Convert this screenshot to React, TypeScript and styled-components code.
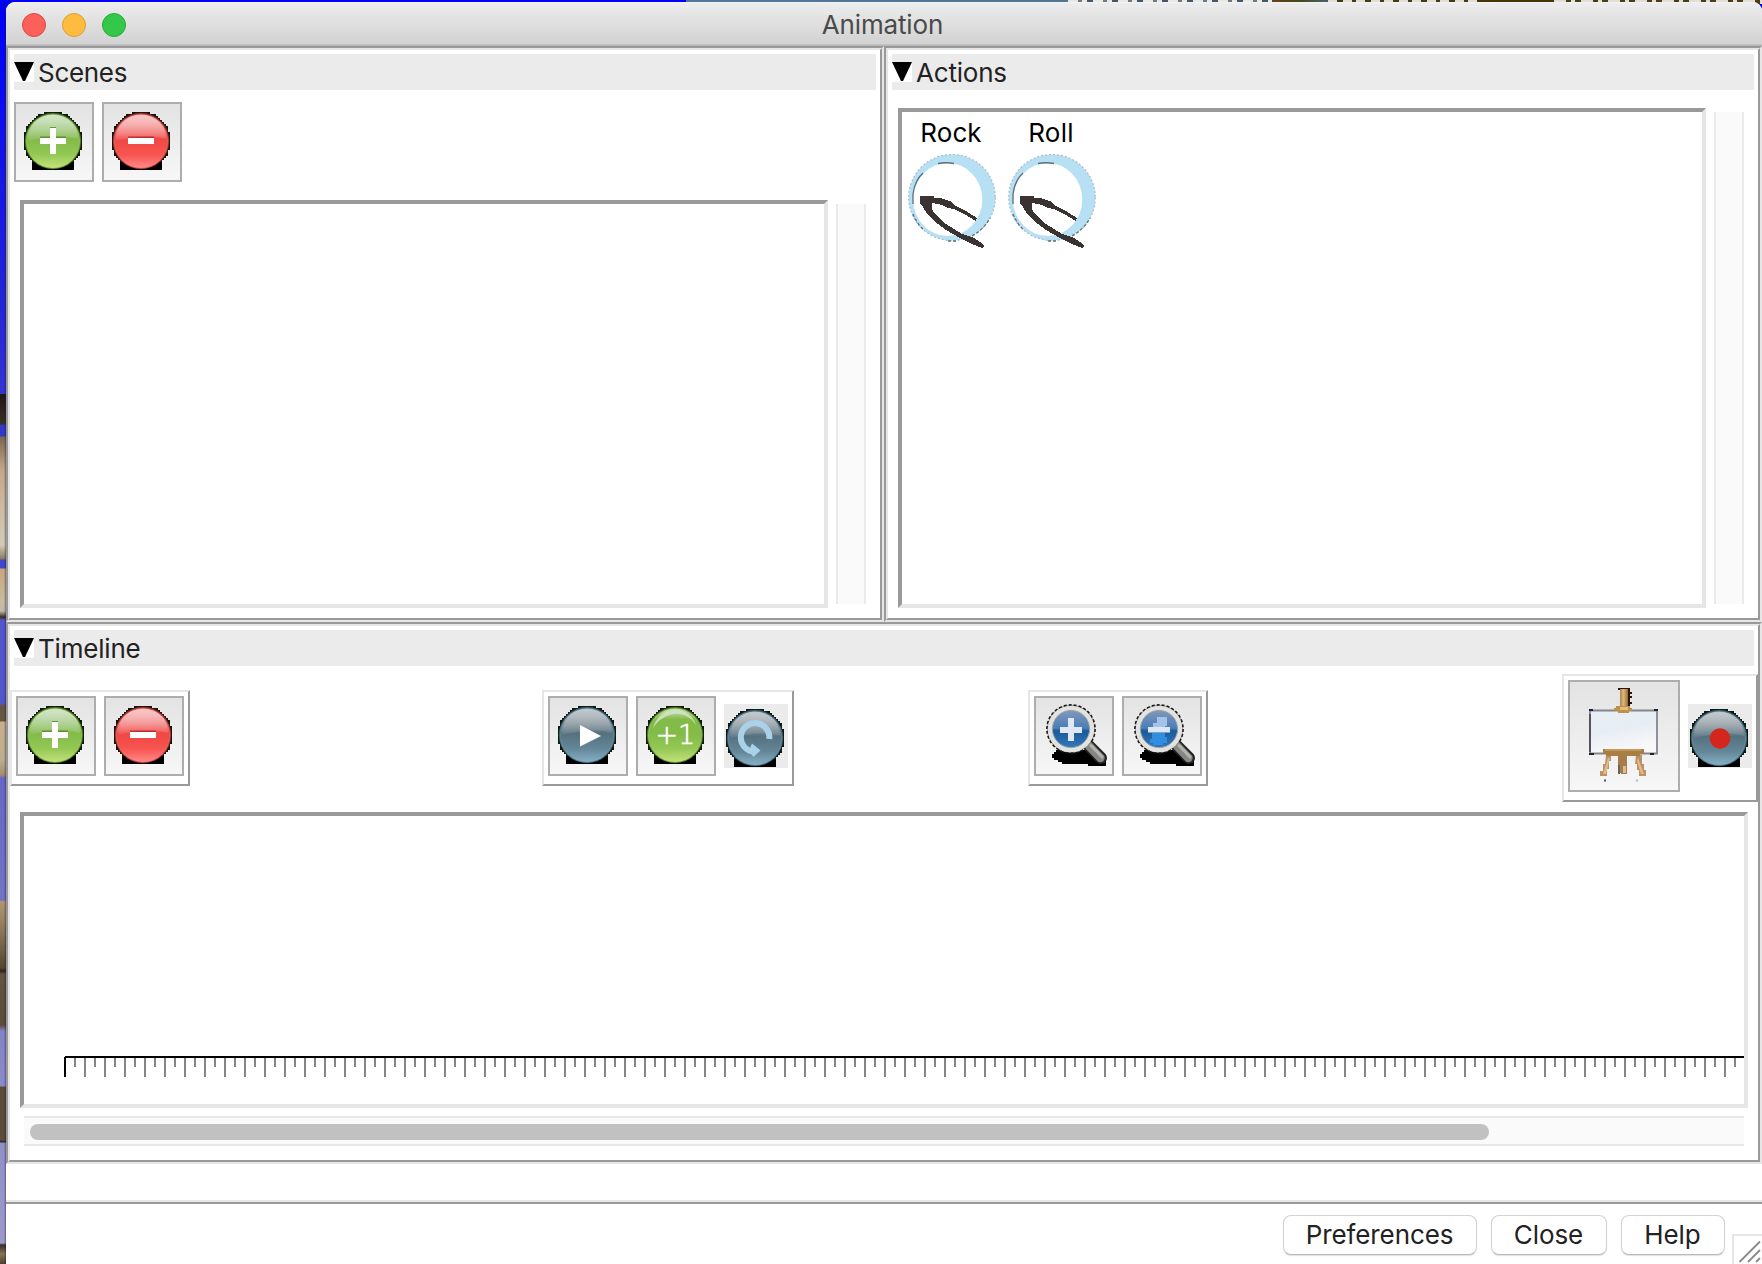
import React from "react";
import styled, { createGlobalStyle } from "styled-components";

const DARK = "#999999";
const LIGHT = "#e6e6e6";

const GlobalStyle = createGlobalStyle`
  * { box-sizing: border-box; }
  body { margin: 0; overflow: hidden; font-family: Inter, "Liberation Sans", sans-serif; font-size: 26px; color: #222; }
  svg { display: block; flex: none; }
`;

/* ---------- desktop and window ---------- */

const Desktop = styled.div`
  width: 1762px;
  height: 1264px;
  padding: 2px 0 0 6px;
  background:
    linear-gradient(90deg, transparent 4px, rgba(20, 20, 50, 0.45) 6px) 0 2px / 6px 100% no-repeat,
    linear-gradient(
      180deg,
      transparent 394px, #1d1913 394px, #3a3022 424px, #3338c8 425px, #3338c8 436px,
      #7b684f 437px, #c4a788 470px, #d0bba2 510px, #cfccb6 545px, #8a7a5c 559px,
      #4244cc 560px, #4244cc 568px, #c9a57c 569px, #c9bd9b 600px, #c0b9ae 611px,
      #3a3020 617px, #5255cc 620px, #5255cc 703px, #655643 706px, #655643 721px,
      #c9ae8a 722px, #bcae8e 760px, #a78b66 775px, #6467c8 778px, #7274c6 900px,
      #b09770 902px, #8f785a 930px, #54452f 968px, #2c241a 971px, #63533f 974px,
      #5a4b3a 1025px, #8283c6 1031px, #8c8bc8 1086px, #5c4c3c 1087px, #5c4c3c 1140px,
      #2b2318 1142px, #9090c8 1143px, #9c9aca 1243px, #3a2f24 1245px, #8b745a 1254px, #4f4030 1264px
    ) 0 0 / 6px 1264px no-repeat,
    repeating-linear-gradient(90deg, #e8e8e4 0 10px, #6d7a82 10px 14px, #e8e8e4 14px 19px, #46576a 19px 25px) 1068px 0 / 204px 2px no-repeat,
    repeating-linear-gradient(90deg, #e0ded6 0 9px, #473914 9px 15px, #e0ded6 15px 24px, #473914 24px 28px) 1328px 0 / 150px 2px no-repeat,
    repeating-linear-gradient(90deg, #e0ded6 0 12px, #4c3d15 12px 17px, #e0ded6 17px 21px, #4c3d15 21px 27px) 1554px 0 / 208px 4px no-repeat,
    linear-gradient(90deg, transparent 686px, #53779a 686px, #4f7795 1180px, #59402c 1210px, #6b401c 1270px, #454b1c 1300px, #4c5f68 1325px, #453709 1345px, #43340a 1762px) 0 0 / 1762px 4px no-repeat,
    linear-gradient(180deg, #0000fa 0, #0c0cf0 100px, #2424d8 300px, #3535d0 400px, #4a4acc 600px);
`;

const Window = styled.main`
  display: flex;
  flex-direction: column;
  width: 1756px;
  height: 1262px;
  background: #fff;
  border-radius: 9px 9px 0 0;
  overflow: hidden;
`;

const TitleBar = styled.header`
  display: grid;
  grid-template-columns: 200px 1fr 200px;
  align-items: center;
  height: 44px;
  flex: none;
  padding-left: 16px;
  background: linear-gradient(180deg, #f4f4f4 0, #ececec 2px, #d2d2d2 42px, #b4b4b4 43px, #b4b4b4 44px);
`;

const Lights = styled.div`
  display: flex;
  gap: 16px;
  margin-top: 1px;
`;

const Light = styled.span<{ $fill: string; $edge: string }>`
  width: 24px;
  height: 24px;
  border-radius: 50%;
  background: ${(p) => p.$fill};
  border: 1px solid ${(p) => p.$edge};
`;

const Title = styled.h1`
  margin: 2px 0 0;
  padding-right: 19px;
  text-align: center;
  font-size: 26px;
  font-weight: 400;
  line-height: 32px;
  letter-spacing: -0.15px;
  color: #4a4a4a;
`;

/* ---------- grooved panels ---------- */

const TopRow = styled.div`
  display: flex;
  height: 576px;
  flex: none;
`;

const Groove = styled.section<{ $w?: number; $h: number }>`
  width: ${(p) => (p.$w ? `${p.$w}px` : "100%")};
  height: ${(p) => p.$h}px;
  flex: none;
  border: 2px solid;
  border-color: ${DARK} ${LIGHT} ${LIGHT} ${DARK};
`;

const GrooveInner = styled.div`
  display: flex;
  flex-direction: column;
  height: 100%;
  border: 2px solid;
  border-color: ${LIGHT} ${DARK} ${DARK} ${LIGHT};
  padding-top: 4px;
`;

const Heading = styled.h2`
  display: flex;
  align-items: center;
  gap: 4px;
  height: 36px;
  flex: none;
  margin: 0 4px;
  background: #ebebeb;
  font-size: 26px;
  font-weight: 400;
  line-height: 36px;
`;

const Disclosure = styled.svg`
  background: #fff;
`;

const Label = styled.span<{ $track: number }>`
  letter-spacing: ${(p) => p.$track}px;
  padding-top: 1px;
`;

const Panel = ({ title, track = 0, w, h, children }: { title: string; track?: number; w?: number; h: number; children: React.ReactNode }) => (
  <Groove $w={w} $h={h}>
    <GrooveInner>
      <Heading>
        <Disclosure width="20" height="20" viewBox="0 0 20 20">
          <path d="M0 0H20L11 19H9Z" fill="#000" />
        </Disclosure>
        <Label $track={track}>{title}</Label>
      </Heading>
      {children}
    </GrooveInner>
  </Groove>
);

/* ---------- lists and scrollbars ---------- */

const ListRow = styled.div<{ $top: number }>`
  display: flex;
  gap: 8px;
  margin: ${(p) => p.$top}px 14px 10px 10px;
  flex: 1;
`;

const Sunken = styled.div`
  flex: 1;
  display: flex;
  border: 4px solid;
  border-color: ${DARK} ${LIGHT} ${LIGHT} ${DARK};
`;

const VScroll = styled.div`
  width: 30px;
  margin: 4px 0;
  border: solid #ebebeb;
  border-width: 0 2px;
  background: #fafafa;
`;

const HScroll = styled.div`
  height: 30px;
  flex: none;
  margin: 8px 14px 0;
  padding: 6px;
  border: solid #e8e8e8;
  border-width: 2px 0;
  background: #fafafa;
`;

const Thumb = styled.div`
  width: 1459px;
  height: 16px;
  border-radius: 8px;
  background: #c1c1c1;
`;

/* ---------- tool buttons ---------- */

const Tools = styled.div`
  display: flex;
  gap: 8px;
  margin: 12px 4px 0;
`;

const ToolButton = styled.button<{ $size?: number; $inset?: string }>`
  display: flex;
  align-items: center;
  justify-content: center;
  width: ${(p) => p.$size ?? 80}px;
  height: ${(p) => p.$size ?? 80}px;
  flex: none;
  padding: ${(p) => p.$inset ?? "0 2px 2px 0"};
  border: 2px solid #adadad;
  background: linear-gradient(180deg, #e3e3e3, #f7f7f7);
`;

const FlatButton = styled.button`
  width: 64px;
  height: 64px;
  flex: none;
  padding: 3px 0 0 2px;
  border: 0;
  background: #ebebeb;
`;

const ToolBar = styled.div`
  display: flex;
  align-items: center;
  height: 128px;
  margin-top: 8px;
  flex: none;
`;

const ToolGroup = styled.div<{ $before?: number; $tall?: boolean }>`
  display: flex;
  align-items: center;
  gap: 8px;
  height: ${(p) => (p.$tall ? 128 : 96)}px;
  margin-left: ${(p) => p.$before ?? 0}px;
  padding: 4px 4px 8px;
  border: 2px solid;
  border-color: ${LIGHT} ${DARK} ${DARK} ${LIGHT};
`;

/* ---------- icons ---------- */

const balls = {
  green: { edge: "#3b6a1b", top: "#a3cb88", mid: "#83bb48", low: "#94c855", glow: "#c4e27c", gloss: "#d2e4c6" },
  red: { edge: "#9c2828", top: "#f49090", mid: "#f04844", low: "#f85450", glow: "#ff8a88", gloss: "#f8c6c6" },
  slate: { edge: "#35566a", top: "#8f9aa2", mid: "#55717f", low: "#648798", glow: "#86b0c6", gloss: "#c2c8cc" },
};

const Ball = ({ tone, flat, id, children }: { tone: keyof typeof balls; flat?: boolean; id: string; children: React.ReactNode }) => {
  const c = balls[tone];
  return (
    <svg width="58" height="58" viewBox="0 0 58 58">
      <defs>
        <linearGradient id={`${id}l`} x1="0" y1="0" x2="0" y2="1">
          <stop offset="0" stopColor={c.gloss} />
          <stop offset="0.2" stopColor={flat ? c.mid : c.top} />
          <stop offset="0.47" stopColor={c.mid} />
          <stop offset="0.75" stopColor={c.low} />
          <stop offset="1" stopColor={c.glow} />
        </linearGradient>
        <linearGradient id={`${id}g`} x1="0" y1="0" x2="0" y2="1">
          <stop offset="0" stopColor={c.gloss} stopOpacity="0.8" />
          <stop offset="1" stopColor={c.gloss} stopOpacity="0.08" />
        </linearGradient>
      </defs>
      <path d="M8 48H50V58H8Z" fill="#000" />
      <path
        d="M20 0H38V2H44V4H46V6H48V8H50V10H52V12H54V14H56V20H58V38H56V44H54V46H52V48H50V50H8V48H6V46H4V44H2V38H0V20H2V14H4V12H6V10H8V8H10V6H12V4H14V2H20Z"
        fill="#10180c"
      />
      <circle cx="29" cy="29" r="28.2" fill={c.edge} />
      <circle cx="29" cy="29.3" r="26.8" fill={`url(#${id}l)`} stroke={c.glow} strokeOpacity="0.35" strokeWidth="1.4" />
      {!flat && <path d="M4 29C4 12 15 3 29 3S54 12 54 27C43 23 24 24 4 29Z" fill={`url(#${id}g)`} />}
      {flat && <path d="M7 22C10 11 19 4 29 4S47 10 50 19C44 10 36 7 28 8S12 14 7 22Z" fill={c.gloss} opacity="0.85" />}
      {children}
    </svg>
  );
};

const PlusIcon = ({ id }: { id: string }) => (
  <Ball tone="green" id={id}>
    <path d="M16 24.5H42V27H16ZM26 15H32V17H26Z" fill="#4c7d2a" opacity="0.75" />
    <path d="M26 16H32V26H42V32H32V42H26V32H16V26H26Z" fill="#fff" />
  </Ball>
);

const MinusIcon = ({ id }: { id: string }) => (
  <Ball tone="red" id={id}>
    <path d="M16 24.5H42V27H16Z" fill="#aa2222" opacity="0.75" />
    <path d="M16 26H42V32H16Z" fill="#fff" />
  </Ball>
);

const PlayIcon = () => (
  <Ball tone="slate" id="play">
    <path d="M22 19L43 30L22 40.5Z" fill="#fff" />
  </Ball>
);

const BallText = styled.text`
  font-family: "DejaVu Sans", sans-serif;
  font-weight: 200;
  font-size: 27px;
  fill: #fff;
  stroke: #fff;
  stroke-width: 0.6px;
`;

const PlusOneIcon = () => (
  <Ball tone="green" flat id="one">
    <BallText x="9.5" y="38">+1</BallText>
  </Ball>
);

const RepeatIcon = () => (
  <Ball tone="slate" id="repeat">
    <path d="M43.3 30A14.3 14.3 0 1 0 27 42.5" fill="none" stroke="#a9d2e8" strokeWidth="6" />
    <path d="M26 34.5L34.5 41.5L27.5 48L24.5 44V38Z" fill="#a9d2e8" />
  </Ball>
);

const RecordIcon = () => (
  <Ball tone="slate" id="rec">
    <circle cx="30" cy="29.5" r="10.3" fill="#d4261c" />
  </Ball>
);

const ZoomIcon = ({ id, minus }: { id: string; minus?: boolean }) => (
  <svg width="62" height="64" viewBox="0 0 62 64">
    <defs>
      <linearGradient id={id} x1="0" y1="0" x2="0" y2="1">
        <stop offset="0" stopColor="#8298b8" />
        <stop offset="0.48" stopColor="#4a7db8" />
        <stop offset="0.55" stopColor="#195a98" />
        <stop offset="1" stopColor="#3478bc" />
      </linearGradient>
    </defs>
    <path d="M11 46H42L54 46L61 51V62H43V60H17V58H13V56H9V54H7V50H9V48H11Z" fill="#000" />
    <circle cx="26" cy="25" r="24" fill="#8a8a88" stroke="#1a1a1a" strokeWidth="1.8" strokeDasharray="3 2" />
    <path d="M44 42L56 54" stroke="#222" strokeWidth="12" strokeLinecap="round" />
    <path d="M44 42L55.500 54" stroke="#858782" strokeWidth="8.500" strokeLinecap="round" />
    <path d="M46 41.500L57 53" stroke="#b2b4ae" strokeWidth="3" strokeLinecap="round" />
    <circle cx="26" cy="25" r="20.800" fill="none" stroke="#e2e3df" strokeWidth="5" />
    <circle cx="26" cy="25" r="18.600" fill={`url(#${id})`} stroke="#9aa5ae" strokeWidth="1" />
    {minus ? (
      <>
        <path d="M24 13H34V22H32V24H20V19H24Z" fill="#a4c3ea" />
        <path d="M19 29H32V33H34V39H30V41H20V39H17V35H19Z" fill="#318de0" />
        <path d="M15 23H37V28.500H15Z" fill="#dde6f4" />
      </>
    ) : (
      <path d="M23 14H29V23H37V29H29V37H23V29H15V23H23Z" fill="#dfe7f3" />
    )}
  </svg>
);

const EaselIcon = () => (
  <svg width="108" height="108" viewBox="0 0 108 108">
    <defs>
      <linearGradient id="board" x1="0" y1="0" x2="0.3" y2="1">
        <stop offset="0" stopColor="#e6eff3" />
        <stop offset="0.5" stopColor="#e7edf4" />
        <stop offset="1" stopColor="#f8f8f9" />
      </linearGradient>
      <linearGradient id="wood" x1="0" y1="0" x2="1" y2="0">
        <stop offset="0" stopColor="#a98558" />
        <stop offset="0.45" stopColor="#dcb877" />
        <stop offset="1" stopColor="#9a6a35" />
      </linearGradient>
    </defs>
    <path d="M48 6H60V10H62V12H60V14H62V16H60V20H62V22H60V26H50V8H48Z" fill="#2a1508" />
    <path d="M50 7H58V26H50Z" fill="url(#wood)" />
    <path d="M20 28.500H87V71.500H20Z" fill="url(#board)" stroke="#85868e" strokeWidth="1.800" />
    <path d="M19 28H23M84 28H88M19 72H24M80 72H84" stroke="#20232f" strokeWidth="1.800" />
    <path d="M20 32V70" stroke="#44464f" strokeWidth="1.600" />
    <path d="M46 24H60V26H62V29H59V31H48V29H44V26H46Z" fill="#bd9050" />
    <path d="M50 25H58V28H50Z" fill="#e2bd74" />
    <path d="M36 73H41V79H39V87H37V94H30V89H33V82H35Z" fill="#bd9163" />
    <path d="M38 76H40L36 92H33Z" fill="#e0b98d" />
    <path d="M66 73H72V82H74V88H76V94H69V88H67V82H65Z" fill="#bd9163" />
    <path d="M68 76L74 92H71L67 79Z" fill="#e0b98d" />
    <path d="M48 73H57V92H51V91H48Z" fill="#a87c4a" />
    <path d="M48 83H50V92H48Z" fill="#666" />
    <path d="M53 84H56V91H53Z" fill="#dfba8c" />
    <path d="M33 67H74V72H70V74H36V72H33Z" fill="#a97e45" />
    <path d="M35 67H71V69H35Z" fill="#c39a5b" />
    <path d="M34 97.500H36V99.500H34Z" fill="#555" />
    <path d="M66 97.500H68V99.500H66Z" fill="#bbb" />
  </svg>
);

const QIcon = () => (
  <svg width="88" height="94" viewBox="0 0 88 94">
    <ellipse cx="44" cy="43.500" rx="43.300" ry="43" fill="#b8e0f5" stroke="#a3bccb" strokeWidth="1.200" strokeDasharray="2 2" />
    <ellipse cx="39.700" cy="45.500" rx="34.600" ry="36.500" fill="#fff" />
    <path d="M5 50V40Q7 26 15 19M30 9.500Q38 8 46 9.500" fill="none" stroke="#4a5962" strokeWidth="1.300" strokeOpacity="0.85" />
    <path d="M5 60Q9 70 16 76M40 87H48M64 82Q76 75 82 64" fill="none" stroke="#5f6e77" strokeWidth="1.300" strokeDasharray="3 2" />
    <path
      d="M12 42H26V44H32L42 47L46 51L58 57L69 64L68 67L56 60L46 55L40 54L34 51L24 49V55L27 60L38 70L54 80L66 84L72 88L76 92L74 94L64 90L52 84L38 76L26 67L19 60L15 53L12 50Z"
      fill="#3b3232"
      shapeRendering="crispEdges"
    />
  </svg>
);

/* ---------- actions and timeline ---------- */

const Action = styled.figure`
  display: flex;
  flex-direction: column;
  align-items: center;
  width: 100px;
  margin: 0;
  padding-top: 5px;
  color: #000;
`;

const ActionName = styled.figcaption<{ $track: number }>`
  height: 37px;
  padding-right: 2px;
  line-height: 32px;
  letter-spacing: ${(p) => p.$track}px;
`;

const TimelineCanvas = styled.div`
  height: 296px;
  flex: none;
  margin: 10px 10px 0;
  padding: 240px 0 0 40px;
  border: 4px solid;
  border-color: ${DARK} ${LIGHT} ${LIGHT} ${DARK};
`;

const ticks = Array.from({ length: 167 }, (_, i) => i + 1);

const Ruler = () => (
  <svg width="1680" height="21" viewBox="0 0 1680 21">
    {ticks.map((i) => (
      <rect key={i} x={i * 10} y="1" width="2" height={i % 2 ? 10 : 20} fill="#858585" />
    ))}
    <path d="M1 0H1680V2H2V21H0V1H1Z" fill="#000" />
  </svg>
);

/* ---------- footer ---------- */

const Status = styled.div`
  height: 36px;
  flex: none;
`;

const Footer = styled.footer`
  display: flex;
  flex: 1;
  gap: 14px;
  padding: 11px 0 0 1277px;
  border-top: 2px solid ${LIGHT};
  box-shadow: inset 0 2px 0 ${DARK};
`;

const PushButton = styled.button<{ $w: number }>`
  width: ${(p) => p.$w}px;
  height: 40px;
  margin-top: 2px;
  padding: 0 1px 0 0;
  border: 1px solid #d2d2d2;
  border-bottom-color: #b9b9b9;
  border-radius: 8px;
  background: #fff;
  box-shadow: 0 1px 1px rgba(0, 0, 0, 0.12);
  color: #222;
  font: 400 26px/36px Inter, "Liberation Sans", sans-serif;
  letter-spacing: -0.1px;
`;

const Grip = styled.div`
  width: 30px;
  height: 30px;
  margin: 21px 0 0 -7px;
  border: solid ${LIGHT};
  border-width: 2px 0 0 2px;
`;

export default function App() {
  return (
    <>
      <GlobalStyle />
      <Desktop>
        <Window>
          <TitleBar>
            <Lights>
              <Light $fill="#fc605b" $edge="#df4744" />
              <Light $fill="#fdbc40" $edge="#de9f34" />
              <Light $fill="#34c84a" $edge="#27aa35" />
            </Lights>
            <Title>Animation</Title>
          </TitleBar>
          <TopRow>
            <Panel title="Scenes" track={-0.3} w={878} h={576}>
              <Tools>
                <ToolButton><PlusIcon id="sceneAdd" /></ToolButton>
                <ToolButton><MinusIcon id="sceneDel" /></ToolButton>
              </Tools>
              <ListRow $top={18}>
                <Sunken />
                <VScroll />
              </ListRow>
            </Panel>
            <Panel title="Actions" track={-0.2} w={878} h={576}>
              <ListRow $top={18}>
                <Sunken>
                  <Action>
                    <ActionName $track={0.1}>Rock</ActionName>
                    <QIcon />
                  </Action>
                  <Action>
                    <ActionName $track={0.3}>Roll</ActionName>
                    <QIcon />
                  </Action>
                </Sunken>
                <VScroll />
              </ListRow>
            </Panel>
          </TopRow>
          <Panel title="Timeline" track={-0.2} h={542}>
            <ToolBar>
              <ToolGroup>
                <ToolButton><PlusIcon id="keyAdd" /></ToolButton>
                <ToolButton><MinusIcon id="keyDel" /></ToolButton>
              </ToolGroup>
              <ToolGroup $before={352}>
                <ToolButton><PlayIcon /></ToolButton>
                <ToolButton><PlusOneIcon /></ToolButton>
                <FlatButton><RepeatIcon /></FlatButton>
              </ToolGroup>
              <ToolGroup $before={234}>
                <ToolButton $inset="0 0 0 4px"><ZoomIcon id="zoomIn" /></ToolButton>
                <ToolButton $inset="0 0 0 4px"><ZoomIcon id="zoomOut" minus /></ToolButton>
              </ToolGroup>
              <ToolGroup $before={354} $tall>
                <ToolButton $size={112} $inset="0"><EaselIcon /></ToolButton>
                <FlatButton><RecordIcon /></FlatButton>
              </ToolGroup>
            </ToolBar>
            <TimelineCanvas>
              <Ruler />
            </TimelineCanvas>
            <HScroll>
              <Thumb />
            </HScroll>
          </Panel>
          <Status />
          <Footer>
            <PushButton $w={194}>Preferences</PushButton>
            <PushButton $w={116}>Close</PushButton>
            <PushButton $w={104}>Help</PushButton>
            <Grip>
              <svg width="28" height="28" viewBox="0 0 28 28">
                <path d="M5.500 26L26 5.500M14 26L26 14M22 26L26 22" stroke="#8a8a8a" strokeWidth="1.800" />
              </svg>
            </Grip>
          </Footer>
        </Window>
      </Desktop>
    </>
  );
}
